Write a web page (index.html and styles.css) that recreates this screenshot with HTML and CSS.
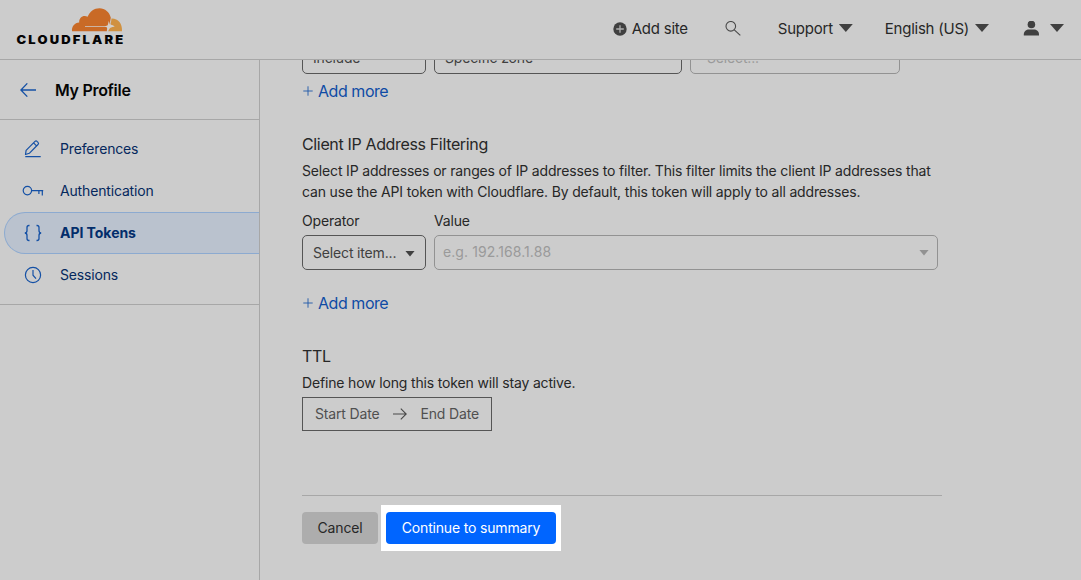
FILE: index.html
```html
<!DOCTYPE html>
<html lang="en">
<head>
<meta charset="utf-8">
<title>API Tokens | Cloudflare</title>
<link rel="stylesheet" href="styles.css">
</head>
<body>
<header class="topbar">
  <svg class="logo" width="108" height="40" viewBox="0 0 108 40">
    <path fill="#c96a26" d="M56 25.200c-.5-4.700 2.500-8.300 7.200-8.700-.3-4.900 4-7.800 8.400-5.700C73.800 5.600 78 2.300 83.500 2.300c5.500 0 10 3.900 11.300 9.400l-.8 4.200c1 3-1 4.100-4.500 4.100H69v.8h20.500c1.600 0 2 1.200 1.300 4.400z"/>
    <path fill="#d09140" d="M95.500 12.400c6.500-.2 11 4.700 10.500 12.800H92.200l1.200-3.200 5.300-1.700-4-1.800z"/>
    <path fill="#d6d0c9" d="M92.800 15l1.200 3.700 4.600 1.500-4.400 1.300-1.700 3-.8-3-3-.9 3-1.400z"/>
    <text class="wordmark" transform="translate(0.500 38) scale(1.1 1)" x="0" y="0" textLength="97" lengthAdjust="spacing">CLOUDFLARE</text>
  </svg>
  <nav class="tools">
    <a class="tool add-site"><svg width="14" height="14" viewBox="0 0 14 14"><circle cx="7" cy="7" r="6.700" fill="#404040"/><path d="M7 3.200v7.600M3.200 7h7.600" stroke="#b0b0b0" stroke-width="1.300"/></svg><span>Add site</span></a>
    <a class="tool search"><svg width="16" height="16" viewBox="0 0 16 16" fill="none" stroke="#484848" stroke-width="1.100"><circle cx="5.800" cy="5.300" r="4.800"/><path d="M9.300 8.800l6 5.500"/></svg></a>
    <a class="tool support"><span>Support</span><i class="caret"></i></a>
    <a class="tool language"><span>English (US)</span><i class="caret"></i></a>
    <a class="tool user"><svg width="16" height="16" viewBox="0 0 16 16" fill="#404040"><circle cx="8.400" cy="3.500" r="3.800"/><path d="M.8 14.500V13.400c0-3.300 2.600-4.900 5.100-4.900h5c2.500 0 5.100 1.600 5.100 4.900v1.100z"/></svg><i class="caret"></i></a>
  </nav>
</header>
<div class="body">
  <aside class="sidebar">
    <div class="profile">
      <svg width="16" height="14" viewBox="0 0 16 14" fill="none" stroke="#1450a5" stroke-width="1.300"><path d="M16 7H1M7.300.4L.9 7l6.400 6.600"/></svg>
      <h1 class="profile-title">My Profile</h1>
    </div>
    <nav class="menu">
      <a class="item"><svg width="20" height="20" viewBox="0 0 20 20" fill="none" stroke="#1450a5" stroke-width="1.200" stroke-linejoin="round"><path d="M2.500 15.500l.6-4.200 8.900-8.900c.7-.7 1.400-.7 2 0l1 1c.7.700.7 1.400 0 2.100l-8.700 8.800zM10.600 3.900l2.900 2.900M2.300 17.700h15.400"/></svg><span>Preferences</span></a>
      <a class="item"><svg width="22" height="20" viewBox="0 0 22 20" fill="none" stroke="#1450a5" stroke-width="1.200"><circle cx="5.400" cy="9.600" r="4.200"/><path d="M9.600 9.600H21.200M16.900 9.600v3.500M20.300 9.600v4.800"/></svg><span>Authentication</span></a>
      <a class="item active"><svg width="20" height="20" viewBox="0 0 20 20" fill="none" stroke="#1450a5" stroke-width="1.300"><path d="M6.500 2.500H6c-1.300 0-2 .7-2 2v3C4 9 3.300 10 1.800 10 3.300 10 4 11 4 12.500v3c0 1.300.7 2 2 2h.5M13.500 2.500h.5c1.300 0 2 .7 2 2v3c0 1.500.7 2.500 2.200 2.500-1.500 0-2.200 1-2.200 2.500v3c0 1.300-.7 2-2 2h-.5"/></svg><span>API Tokens</span></a>
      <a class="item"><svg width="20" height="20" viewBox="0 0 20 20" fill="none" stroke="#1450a5" stroke-width="1.200"><circle cx="10" cy="10" r="7.600"/><path d="M10 5v5.200l3 3.500"/></svg><span>Sessions</span></a>
    </nav>
  </aside>
  <main class="content">
    <div class="row scrolled">
      <div class="field small">Include</div>
      <div class="field medium">Specific zone</div>
      <div class="field zone muted">Select...</div>
    </div>
    <a class="add-more"><svg width="12" height="12" viewBox="0 0 12 12"><path d="M6 1.300v9.400M1.300 6h9.400" stroke="#1e57a8" stroke-width=".9"/></svg><span>Add more</span></a>
    <section class="filtering">
      <h2 class="heading">Client IP Address Filtering</h2>
      <p class="text">Select IP addresses or ranges of IP addresses to filter. This filter limits the client IP addresses that<br>can use the API token with Cloudflare. By default, this token will apply to all addresses.</p>
      <div class="row labels"><span class="label-op">Operator</span><span>Value</span></div>
      <div class="row">
        <div class="field small"><span>Select item...</span><i class="caret tiny"></i></div>
        <div class="field value muted"><span>e.g. 192.168.1.88</span><i class="caret tiny pale"></i></div>
      </div>
      <a class="add-more second"><svg width="12" height="12" viewBox="0 0 12 12"><path d="M6 1.300v9.400M1.300 6h9.400" stroke="#1e57a8" stroke-width=".9"/></svg><span>Add more</span></a>
    </section>
    <section class="ttl">
      <h2 class="heading">TTL</h2>
      <p class="text">Define how long this token will stay active.</p>
      <div class="dates"><span>Start Date</span><svg width="14" height="12" viewBox="0 0 14 12" fill="none" stroke="#484848" stroke-width="1.100"><path d="M0 6h13M7.800.6L13.200 6l-5.400 5.400"/></svg><span>End Date</span></div>
    </section>
    <footer class="actions">
      <button class="btn cancel">Cancel</button>
      <div class="spotlight"><button class="btn primary">Continue to summary</button></div>
    </footer>
  </main>
</div>
</body>
</html>
```
FILE: styles.css
```css
* { box-sizing: border-box; }
body { margin: 0; width: 1081px; height: 580px; overflow: hidden; display: flex; flex-direction: column; background: #ccc; color: #272727; font: 14px/21px Inter, "Liberation Sans", sans-serif; letter-spacing: -.16px; }
h1, h2, p { margin: 0; font-weight: 400; }
svg { display: block; flex: none; }

.topbar { flex: none; height: 60px; border-bottom: 1px solid #a7a7a7; display: flex; justify-content: space-between; padding: 6px 17px 0 16px; }
.wordmark { font: 900 11.8px Inter, sans-serif; letter-spacing: 0; fill: #050505; }
.tools { display: flex; height: 45px; align-items: center; font-size: 15px; letter-spacing: -.24px; }
.tool { display: flex; align-items: center; }
.add-site { gap: 5px; margin-right: 37px; }
.search { margin-right: 37px; }
.support { gap: 6px; margin-right: 32px; }
.language { gap: 6px; margin-right: 34px; }
.user { gap: 11px; }
.caret { width: 14px; height: 8px; margin-bottom: 1px; background: #404040; clip-path: polygon(0 0, 100% 0, 50% 100%); flex: none; }
.caret.tiny { width: 10px; height: 6px; margin: 2px 0 0; }
.caret.pale { margin-top: 0; background: #929292; }

.body { flex: 1; min-height: 0; display: flex; }
.sidebar { width: 260px; flex: none; border-right: 1px solid #a7a7a7; }
.profile { height: 60px; border-bottom: 1px solid #a7a7a7; padding-left: 20px; display: flex; align-items: center; gap: 19px; }
.profile-title { padding-top: 2px; font-size: 16px; font-weight: 600; letter-spacing: -.3px; color: #050505; }
.menu { padding: 8px 0; border-bottom: 1px solid #a7a7a7; }
.item { height: 42px; margin-left: 4px; padding-left: 17px; border: 1px solid transparent; border-right: 0; border-radius: 21px 0 0 21px; display: flex; align-items: center; color: #05285d; }
.item svg { width: 22px; margin-right: 16px; }
.item span { padding-bottom: 2px; }
.item.active { background: #bac2ce; border-color: #8caad0; font-weight: 700; letter-spacing: -.04px; color: #032d6b; }

.content { flex: 1; padding-left: 42px; overflow: hidden; }
.row { display: flex; gap: 8px; }
.row.scrolled { margin-top: -21px; }
.field { height: 35px; border: 1px solid #555; border-radius: 5px; padding: 1px 10px 0; display: flex; align-items: center; justify-content: space-between; color: #404040; }
.row:not(.scrolled) > .field.small { padding-top: 0; }
.field.small { width: 124px; }
.field.medium { width: 248px; }
.field.zone { width: 210px; padding-left: 16px; }
.field.value { width: 504px; padding: 0 8px; letter-spacing: .08px; }
.field.value span { padding-bottom: 2px; }
.field.muted { border-color: #929292; color: #9a9a9a; }
.add-more { display: flex; align-items: center; gap: 4px; height: 24px; margin-top: 5px; color: #0f4ba5; font-size: 16px; letter-spacing: -.45px; }
.add-more.second { margin-top: 21px; }
.heading { font-size: 16px; line-height: 24px; letter-spacing: -.35px; }
.filtering { margin-top: 29px; }
.text { margin-top: 4px; white-space: nowrap; }
.labels { margin: 8px 0 4px; }
.label-op { width: 124px; }
.ttl { margin-top: 29px; }
.dates { width: 190px; height: 34px; margin-top: 4px; border: 1px solid #555; padding: 0 12px 1px; display: flex; align-items: center; justify-content: space-between; color: #505050; }
.actions { width: 640px; margin-top: 64px; border-top: 1px solid #a7a7a7; padding-top: 9px; display: flex; gap: 3px; }
.btn { height: 32px; padding: 0 0 2px; border: 0; border-radius: 4px; font: inherit; letter-spacing: -.17px; }
.cancel { width: 76px; margin-top: 7px; background: #adadad; color: #272727; }
.spotlight { width: 180px; height: 46px; padding: 7px 5px; background: #fff; }
.primary { width: 170px; display: block; background: #0065ff; color: #fff; }
```
